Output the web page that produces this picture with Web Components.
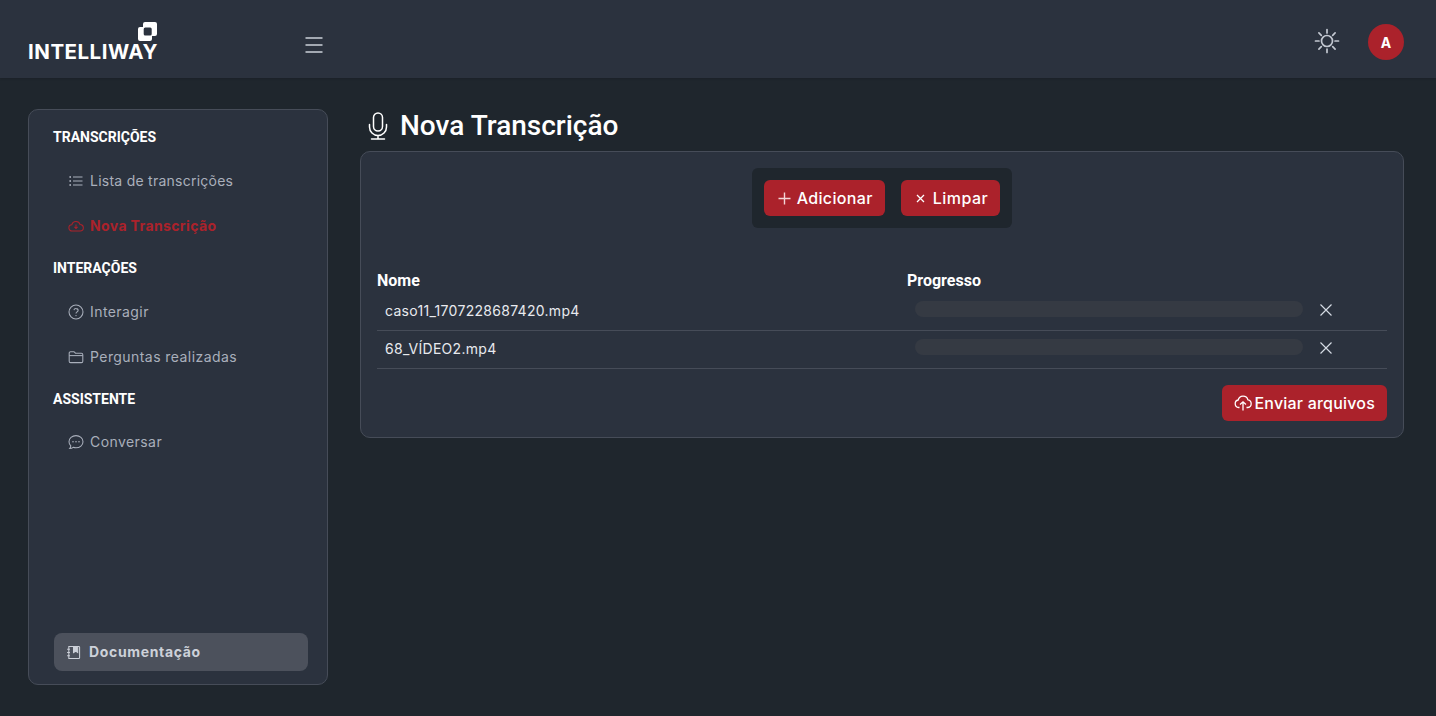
<!DOCTYPE html>
<html lang="pt"><head><meta charset="utf-8"><title>Nova Transcrição</title>
<style>
html,body{margin:0;height:716px;overflow:hidden;background:#1f262d;font-family:Inter,"Noto Sans",sans-serif}
</style></head><body>
<app-shell>
  <app-header slot="header"></app-header>
  <side-nav slot="nav">
    <nav-heading>TRANSCRIÇÕES</nav-heading>
    <nav-item icon="list" style="--ls:.25px">Lista de transcrições</nav-item>
    <nav-item icon="cloud" active style="--ls:.38px">Nova Transcrição</nav-item>
    <nav-heading>INTERAÇÕES</nav-heading>
    <nav-item icon="question">Interagir</nav-item>
    <nav-item icon="folder">Perguntas realizadas</nav-item>
    <nav-heading style="margin-bottom:10.5px">ASSISTENTE</nav-heading>
    <nav-item icon="chat">Conversar</nav-item>
    <doc-button slot="foot">Documentação</doc-button>
  </side-nav>
  <upload-page slot="main"></upload-page>
</app-shell>
<script>
const ICONS={
 list:'<circle cx="2.2" cy="4" r=".9" fill="currentColor" stroke="none"/><circle cx="2.2" cy="8" r=".9" fill="currentColor" stroke="none"/><circle cx="2.2" cy="12" r=".9" fill="currentColor" stroke="none"/><path d="M5 4h9.5M5 8h9.5M5 12h9.5"/>',
 cloud:'<path d="M4.2 13a3.1 3.1 0 0 1-.4-6.200 4.300 4.300 0 0 1 8.300-.2 3.200 3.200 0 0 1 .1 6.400z"/><path d="M8 6.500v3.600M6.400 8.800 8 10.400l1.600-1.600"/>',
 question:'<circle cx="8" cy="8" r="7"/><path d="M5.900 6.200A2.100 2.100 0 0 1 8 4.600c1.200 0 2.100.8 2.100 1.800 0 1.500-2.100 1.600-2.100 3.100"/><circle cx="8" cy="11.600" r=".7" fill="currentColor" stroke="none"/>',
 folder:'<path d="M1.200 4.200c0-.8.6-1.400 1.400-1.400h3.100c.5 0 .9.3 1.100.6l.6.9h6c.8 0 1.400.6 1.400 1.400v6.500c0 .8-.6 1.400-1.400 1.400H2.600c-.8 0-1.400-.6-1.400-1.400z"/><path d="M1.200 6.600h13.600"/>',
 chat:'<path d="M8 1.600c3.900 0 7 2.700 7 6.100s-3.100 6.100-7 6.100c-1 0-1.900-.2-2.800-.5-.9.7-2 1.200-3.500 1.200.6-.7 1-1.600 1.100-2.600C1.800 10.700 1 9.300 1 7.700c0-3.400 3.100-6.100 7-6.100z"/><circle cx="5" cy="7.800" r=".8" fill="currentColor" stroke="none"/><circle cx="8" cy="7.800" r=".8" fill="currentColor" stroke="none"/><circle cx="11" cy="7.800" r=".8" fill="currentColor" stroke="none"/>'
};
function def(name,css,html){
  customElements.define(name,class extends HTMLElement{
    constructor(){super();this.attachShadow({mode:'open'}).innerHTML='<style>'+css+'</style>'+(typeof html==='function'?html(this):html);}
  });
}
def('app-shell',`:host{display:block;height:716px}
.body{display:flex;gap:32px;padding:31px 32px 31px 28px;height:576px}`,
`<slot name="header"></slot><div class="body"><slot name="nav"></slot><slot name="main"></slot></div>`);

def('app-header',`:host{display:flex;align-items:center;height:78px;background:#2b323e;box-shadow:0 1px 2px rgba(0,0,0,.12);padding:6px 32px 0 28px;box-sizing:border-box;color:#fff}
.logo{position:relative;width:129px;height:38px;margin-top:-2px;flex:none}
.logo svg{position:absolute;right:0;top:0}
.logo span{position:absolute;left:0;bottom:-2px;font:700 20.5px/20px Inter,sans-serif;letter-spacing:.5px;white-space:nowrap}
.burger{margin-left:148px;margin-top:6px;color:#ccd1d9;display:block}
.sp{flex:1}
.sun{color:#c3c8d1;display:block;margin:-2px 27px 0 0}
.av{width:36px;height:36px;border-radius:50%;background:#ab222b;color:#fff;display:flex;align-items:center;justify-content:center;font:700 14px Inter,sans-serif;margin-left:1px}`,
`<div class="logo"><svg width="19" height="19" viewBox="0 0 19 19"><path fill="#fff" fill-rule="evenodd" d="M7 0h10a2 2 0 0 1 2 2v10a2 2 0 0 1-2 2h-3v3a2 2 0 0 1-2 2H2a2 2 0 0 1-2-2V7a2 2 0 0 1 2-2h3V2a2 2 0 0 1 2-2zM7.200 5.500h5a1.500 1.500 0 0 1 1.500 1.500v5a1.500 1.500 0 0 1-1.500 1.500h-5a1.500 1.500 0 0 1-1.500-1.500V7a1.500 1.500 0 0 1 1.500-1.500z"/></svg><span>INTELLIWAY</span></div>
<svg class="burger" width="18" height="16" viewBox="0 0 18 16" stroke="currentColor" stroke-width="1.6" fill="none"><path d="M.5 1h17M.5 8h17M.5 15h17"/></svg>
<div class="sp"></div>
<svg class="sun" width="26" height="26" viewBox="0 0 26 26" stroke="currentColor" stroke-width="1.7" fill="none" stroke-linecap="round"><circle cx="13" cy="13" r="5.500"/><path d="M13 1.500v3.500M13 21v3.500M1.500 13H5M21 13h3.500M4.900 4.900l2.400 2.400M18.700 18.700l2.400 2.400M4.900 21.100l2.400-2.400M18.700 7.300l2.400-2.400"/></svg>
<div class="av">A</div>`);

def('side-nav',`:host{display:block;flex:none;width:300px;height:576px;box-sizing:border-box;background:#2b323e;border:1px solid #464c58;border-radius:10px}
.w{display:flex;flex-direction:column;height:100%;box-sizing:border-box;padding:17px 19px 13px 24px}
.f{margin-top:auto}`,
`<div class="w"><slot></slot><div class="f"><slot name="foot"></slot></div></div>`);

def('nav-heading',`:host{display:block;height:20px;margin:9.500px 0 11.500px;color:#fff;font:700 14px/20px Roboto,sans-serif}
:host(:first-child){margin-top:0}`,`<slot></slot>`);

def('nav-item',`:host{display:flex;align-items:center;height:45px;padding-left:15px;color:#a9afbb;font:400 14px/20px Inter,sans-serif;letter-spacing:var(--ls,.43px)}
:host([active]){color:#ab222b;font-weight:700}
svg{flex:none;margin-right:6px;display:block}`,
el=>`<svg width="16" height="16" viewBox="0 0 16 16" fill="none" stroke="currentColor" stroke-width="1.050">${ICONS[el.getAttribute('icon')]}</svg><slot></slot>`);

def('doc-button',`:host{display:flex;align-items:center;height:38px;background:#4c515c;border-radius:8px;padding-left:12px;color:#cdd1d9;font:700 14px/20px Inter,sans-serif;letter-spacing:.65px;margin-left:1px}
svg{margin-right:8px;display:block}`,
`<svg width="15" height="15" viewBox="0 0 16 16" fill="none" stroke="currentColor" stroke-width="1.100"><path d="M3 1.500h10.500a1 1 0 0 1 1 1v11a1 1 0 0 1-1 1H3z"/><path fill="currentColor" d="M8 1.500h4.500v6.500l-2.200-1.400L8 8z"/><path d="M1.200 4.500h3M1.200 8h3M1.200 11.500h3"/></svg><slot></slot>`);

def('red-button',`:host{display:inline-flex;align-items:center;height:36px;box-sizing:border-box;background:#ab222b;border-radius:6px;color:#fff;font:500 16px/20px Inter,sans-serif;white-space:nowrap;letter-spacing:var(--ls,.33px)}
::slotted(svg){display:block;flex:none}`,`<slot></slot>`);

def('file-row',`:host{display:grid;grid-template-columns:530px 1fr;align-items:center;height:35px;padding-bottom:2px;border-bottom:1px solid #464c58;color:#e8eaee;font:400 14px/20px Inter,sans-serif;letter-spacing:.29px}
.n{padding-left:8px}
.p{display:flex;align-items:center;padding-left:8px}
.b{width:388px;height:16px;border-radius:8px;background:#353a43;margin-bottom:4px}
svg{margin:0 0 2px 15px;display:block;color:#d5dbe4}`,
`<div class="n"><slot></slot></div><div class="p"><div class="b"></div><svg width="16" height="16" viewBox="0 0 16 16" stroke="currentColor" stroke-width="1.150" fill="none"><path d="M2.500 2.500l11 11M13.500 2.500l-11 11"/></svg></div>`);

def('upload-page',`:host{display:block;flex:1;min-width:0;color:#fff}
h1{display:flex;align-items:center;margin:0 0 9px;height:33px;font:500 28px/34px Roboto,sans-serif;padding-left:6px}
h1 svg{margin-right:10px;display:block}
.card{background:#2b323e;border:1px solid #464c58;border-radius:10px;height:287px;box-sizing:border-box;padding:16px}
.tb{display:flex;justify-content:center}
.tools{display:flex;gap:16px;background:#1f262d;border-radius:6px;padding:12px}
.add{padding:0 12px 0 13px}
.clr{padding:0 12px 0 14px;--ls:.5px}
.head{display:grid;grid-template-columns:530px 1fr;margin-top:42px;font:700 16px/22px Roboto,sans-serif;height:23px}
.act{display:flex;justify-content:flex-end;margin-top:16px}`,
`<h1><svg width="24" height="28" viewBox="0 0 24 28" fill="none" stroke="#fff" stroke-width="1.500" stroke-linecap="round"><rect x="7.500" y="1" width="9" height="18" rx="4.500"/><path d="M3.500 12.500v2.500a8.500 8.500 0 0 0 17 0v-2.500M12 23.500V27M5.500 27h13"/></svg>Nova Transcrição</h1>
<div class="card">
 <div class="tb"><div class="tools">
  <red-button class="add"><svg width="15" height="15" viewBox="0 0 15 15" stroke="#f3d5d7" stroke-width="1.400" fill="none" style="margin-right:5px"><path d="M7.500 1.500v12M1.500 7.500h12"/></svg>Adicionar</red-button>
  <red-button class="clr"><svg width="11" height="11" viewBox="0 0 11 11" stroke="#fff" stroke-width="1.300" fill="none" style="margin-right:7px"><path d="M2 2l7 7M9 2l-7 7"/></svg>Limpar</red-button>
 </div></div>
 <div class="head"><div>Nome</div><div>Progresso</div></div>
 <div><file-row>caso11_1707228687420.mp4</file-row><file-row>68_VÍDEO2.mp4</file-row></div>
 <div class="act"><red-button style="padding:0 12px;--ls:.2px"><svg width="18" height="18" viewBox="0 0 18 18" stroke="#fff" stroke-width="1.300" fill="none" style="margin-right:3px"><path d="M5.500 13.500H4.700a3.800 3.800 0 0 1-.5-7.500 5 5 0 0 1 9.700-.2 3.900 3.900 0 0 1 0 7.700h-1.400"/><path d="M9 16.500V8M6 10.500 9 7.800l3 2.700"/></svg>Enviar arquivos</red-button></div>
</div>`);
</script>
</body></html>
